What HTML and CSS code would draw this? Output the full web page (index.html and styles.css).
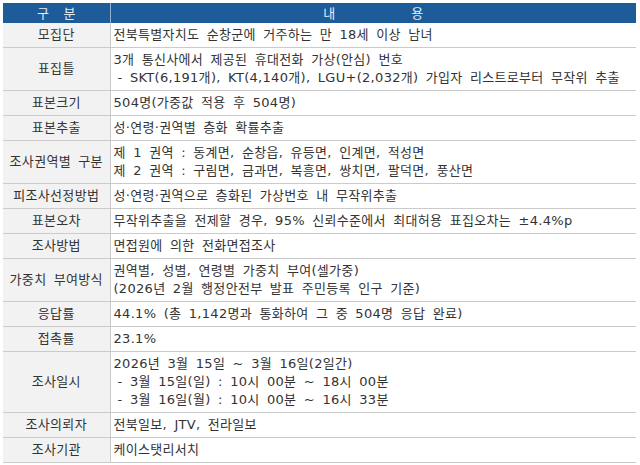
FILE: index.html
```html
<!DOCTYPE html>
<html lang="ko">
<head>
<meta charset="utf-8">
<link rel="stylesheet" href="styles.css">
</head>
<body>
<table class="survey">
  <colgroup><col class="c-label"><col class="c-body"></colgroup>
  <thead>
    <tr><th class="h-label">구&nbsp;&nbsp;&nbsp;&nbsp;분</th><th class="h-body"><span>내</span><span>용</span></th></tr>
  </thead>
  <tbody>
    <tr><td class="label">모집단</td><td class="body">전북특별자치도 순창군에 거주하는 만 18세 이상 남녀</td></tr>
    <tr><td class="label">표집틀</td><td class="body">3개 통신사에서 제공된 휴대전화 가상(안심) 번호<br><span class="ind">- SKT(6,191개), KT(4,140개), LGU+(2,032개) 가입자 리스트로부터 무작위 추출</span></td></tr>
    <tr><td class="label">표본크기</td><td class="body">504명(가중값 적용 후 504명)</td></tr>
    <tr><td class="label">표본추출</td><td class="body">성·연령·권역별 층화 확률추출</td></tr>
    <tr><td class="label">조사권역별 구분</td><td class="body">제 1 권역 : 동계면, 순창읍, 유등면, 인계면, 적성면<br>제 2 권역 : 구림면, 금과면, 복흥면, 쌍치면, 팔덕면, 풍산면</td></tr>
    <tr><td class="label">피조사선정방법</td><td class="body">성·연령·권역으로 층화된 가상번호 내 무작위추출</td></tr>
    <tr><td class="label">표본오차</td><td class="body">무작위추출을 전제할 경우, 95% 신뢰수준에서 최대허용 표집오차는 ±4.4%p</td></tr>
    <tr><td class="label">조사방법</td><td class="body">면접원에 의한 전화면접조사</td></tr>
    <tr><td class="label">가중치 부여방식</td><td class="body">권역별, 성별, 연령별 가중치 부여(셀가중)<br>(2026년 2월 행정안전부 발표 주민등록 인구 기준)</td></tr>
    <tr><td class="label">응답률</td><td class="body">44.1% (총 1,142명과 통화하여 그 중 504명 응답 완료)</td></tr>
    <tr><td class="label">접촉률</td><td class="body">23.1%</td></tr>
    <tr><td class="label">조사일시</td><td class="body">2026년 3월 15일 ~ 3월 16일(2일간)<br><span class="ind">- 3월 15일(일) : 10시 00분 ~ 18시 00분</span><br><span class="ind">- 3월 16일(월) : 10시 00분 ~ 16시 33분</span></td></tr>
    <tr><td class="label">조사의뢰자</td><td class="body">전북일보, JTV, 전라일보</td></tr>
    <tr><td class="label">조사기관</td><td class="body">케이스탯리서치</td></tr>
  </tbody>
</table>
</body>
</html>
```
FILE: styles.css
```css
html, body {
  margin: 0;
  background: #ffffff;
}
body {
  padding: 3px 4px 0 3px;
  font-family: "DejaVu Sans", "Noto Sans CJK KR", sans-serif;
  color: #333333;
}
.survey {
  width: 633px;
  border-collapse: collapse;
  table-layout: fixed;
  font-size: 13px;
}
.c-label { width: 107px; }
.survey th {
  height: 20px;
  padding: 0;
  background: #1e5c99;
  color: #e3eaf3;
  font-weight: normal;
  font-size: 13px;
  line-height: 20px;
  text-align: center;
  font-family: "Noto Sans CJK KR", sans-serif;
}
.h-label { border-right: 1px solid #8fb0d2; }
.h-body span { display: inline-block; }
.h-body span + span { margin-left: 76px; }
.survey td {
  padding: 3px 0 3px;
  line-height: 18px;
  border-bottom: 1px solid #cbcbcb;
  vertical-align: middle;
}
.label {
  background: #f2f2f2;
  text-align: center;
  border-right: 1px solid #cbcbcb;
  letter-spacing: 0.3px;
  word-spacing: 3px;
}
.body {
  padding-left: 3px !important;
  text-align: left;
  white-space: nowrap;
  letter-spacing: 0.3px;
  word-spacing: 3px;
}
.ind { padding-left: 4px; }
```
